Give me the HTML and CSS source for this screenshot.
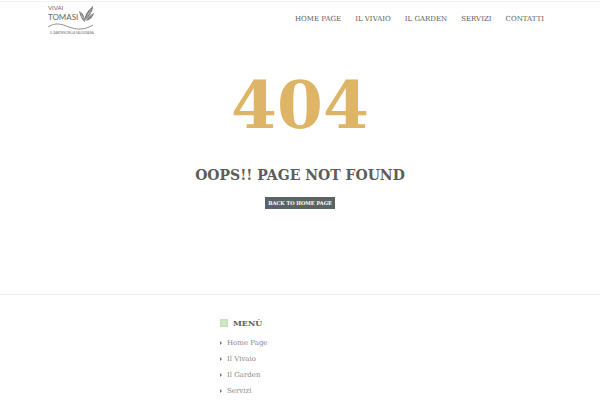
FILE: index.html
```
<!DOCTYPE html>
<html lang="it">
<head>
<meta charset="utf-8">
<title>Vivai Tomasi</title>
<meta name="viewport" content="width=device-width, initial-scale=1">
<link rel="stylesheet" href="styles.css">
</head>
<body>
<header class="site-header">
  <a class="logo" href="#">
    <svg class="logo-mark" viewBox="0 0 48 32" role="img" aria-label="Vivai Tomasi">
      <text class="logo-small" x="1" y="6">VIVAI</text>
      <text class="logo-name" x="1" y="16">TOMASI</text>
      <path class="leaf" d="M38 18C35 16 33 12 32 7c4 2 6 6 6 11zM38 17c-1-5 2-10 8-15 0 6-4 10-8 15zM39 17c2-4 4-6 8-8-1 4-4 7-8 8z"/>
      <path class="leaf-vein" d="M33 8l5 9 6-12M34 12l3 2M40 11l4-3M39 16l6-5"/>
      <path class="wave" d="M1 23C9 18 14 20 22 23S38 26 46 21"/>
      <text class="logo-tag" x="3" y="30">IL GARDEN DELLA VALSUGANA</text>
    </svg>
  </a>
  <nav class="main-nav">
    <a href="#">HOME PAGE</a>
    <a href="#">IL VIVAIO</a>
    <a href="#">IL GARDEN</a>
    <a href="#">SERVIZI</a>
    <a href="#">CONTATTI</a>
  </nav>
</header>
<main class="not-found">
  <h1>404</h1>
  <h2>OOPS!! PAGE NOT FOUND</h2>
  <a class="button" href="#">BACK TO HOME PAGE</a>
</main>
<footer class="site-footer">
  <section class="footer-menu">
    <h3><svg class="menu-icon" viewBox="0 0 8 8" aria-hidden="true"><path class="tile" d="M0 0h8v8H0z"/><path class="tile-mark" d="M2 3h4M2 5h4"/></svg>MENÙ</h3>
    <ul>
      <li><a href="#">Home Page</a></li>
      <li><a href="#">Il Vivaio</a></li>
      <li><a href="#">Il Garden</a></li>
      <li><a href="#">Servizi</a></li>
    </ul>
  </section>
</footer>
</body>
</html>
```
FILE: styles.css
```
* { box-sizing: border-box; }
body {
  margin: 0;
  background: #fff;
  color: #5c5c5c;
  font-family: "DejaVu Serif", serif;
  font-size: 7px;
}
h1, h2, h3, ul { margin: 0; padding: 0; }
a { color: inherit; text-decoration: none; }

.site-header {
  display: flex;
  justify-content: space-between;
  align-items: flex-start;
  margin-top: 1px;
  padding: 2px 56px 0 47px;
  border-top: 1px solid #f2f2f2;
}
.logo-mark { display: block; width: 48px; height: 32px; }
.logo-mark text { fill: #666; font-family: Lato, sans-serif; }
.logo-mark .logo-small { font-size: 6px; }
.logo-mark .logo-name { font-size: 8px; }
.logo-mark .logo-tag { font-size: 3px; }
.leaf { fill: #777; }
.leaf-vein { fill: none; stroke: #ddd; stroke-width: 0.5; }
.wave { fill: none; stroke: #777; stroke-width: 0.8; }

.main-nav {
  display: flex;
  gap: 14px;
  padding-top: 10px;
  line-height: 10px;
}

.not-found {
  display: flex;
  flex-direction: column;
  align-items: center;
  padding: 29px 0 85px;
}
h1 { color: #deb566; font-size: 66px; line-height: 80px; }
h2 { margin-top: 20px; font-size: 14px; line-height: 20px; }
.button {
  margin-top: 12px;
  padding: 0 3px;
  background: #5a6465;
  color: #fff;
  font-size: 5px;
  font-weight: bold;
  line-height: 12px;
}

.site-footer {
  padding: 22px 48px 0 220px;
  border-top: 1px solid #eee;
}
h3 {
  display: flex;
  align-items: center;
  gap: 5px;
  font-size: 8px;
  line-height: 12px;
}
.menu-icon { width: 8px; height: 8px; }
.tile { fill: #c9e2be; }
.tile-mark { stroke: #dfeeda; }
ul { margin-top: 6px; list-style: none; color: #888; }
li { display: flex; align-items: center; gap: 5px; line-height: 16px; }
li::before {
  content: "";
  border: solid transparent;
  border-width: 2px 0 2px 2px;
  border-left-color: #777;
}
```
